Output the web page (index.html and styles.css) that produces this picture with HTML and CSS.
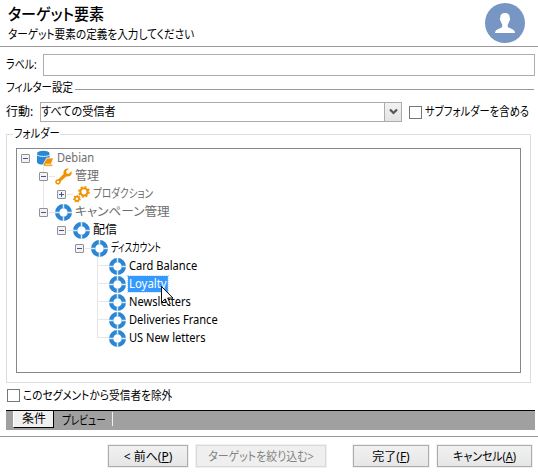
FILE: index.html
```
<!DOCTYPE html>
<html lang="ja">
<head>
<meta charset="utf-8">
<title>ターゲット要素</title>
<link rel="stylesheet" href="styles.css">
</head>
<body>
<svg class="defs" width="0" height="0">
  <symbol id="ring" viewBox="0 0 16 16">
    <circle cx="8" cy="8" r="6" fill="none" stroke="#2b86d3" stroke-width="4"/>
    <path d="M8 0v4M8 12v4M0 8h4M12 8h4" stroke="#d7eaf8" stroke-width="1.4"/>
  </symbol>
  <symbol id="database" viewBox="0 0 17 16">
    <path d="M0 3v8.500c0 1.600 2.500 2.600 6.500 2.600s6-1 6-2.600V3z" fill="#2b86d3"/>
    <ellipse cx="6.300" cy="2.600" rx="6.200" ry="2.400" fill="#2b86d3"/>
    <path d="M0 4.300c1.500 2.200 11.500 2.200 12.500 0" fill="none" stroke="#fff" stroke-width=".9"/>
    <path d="M9.800 7.500h6.700l-2.300 6.200h1.800l-.5 2H7.800c-1.800 0-1.900-1.500-1.200-2.700z" fill="#f29100" stroke="#fff" stroke-width=".8"/>
    <path d="M8.200 13.700h5.500" stroke="#fff" stroke-width=".8"/>
  </symbol>
  <symbol id="wrench" viewBox="0 0 16 16">
    <path d="M13 .5L10.500 3l.4 2.100 2.100.4L15.600 3c.9 3.400-2 5.700-5 4.900l-5.200 4.600c.4 3.600-5 4.200-5.200.7 0-2 1.600-2.800 3-2.500l4.900-5C7.300 2.500 9.700-.1 13 .5z" fill="#f29100"/>
    <circle cx="2.800" cy="13" r="1.100" fill="#fff"/>
  </symbol>
  <symbol id="gears" viewBox="0 0 16 16">
    <g fill="none" stroke="#f29100">
      <circle cx="10.300" cy="5.500" r="3.400" stroke-width="2"/>
      <circle cx="10.300" cy="5.500" r="4.800" stroke-width="1.500" stroke-dasharray="1.900 1.870"/>
      <circle cx="3.700" cy="12" r="2" stroke-width="1.500"/>
      <circle cx="3.700" cy="12" r="3" stroke-width="1.200" stroke-dasharray="1.350 1.350"/>
    </g>
  </symbol>
</svg>
<main class="wizard">
  <header class="head">
    <div>
      <h1><span class="t t-title">ターゲット要素</span></h1>
      <p><span class="t t-sub">ターゲット要素の定義を入力してください</span></p>
    </div>
    <svg class="avatar" width="40" height="40" viewBox="0 0 40 40">
      <circle cx="20" cy="20" r="20" fill="#7796c4"/>
      <path d="M20 10c3.500 0 5 2 4.700 5 .8.300.4 2.600-.5 3.200-.3 1.600-.9 2.400-1.400 3v2.500c1 2 7.200 2 7.200 6.300H10c0-4.300 6.200-4.300 7.200-6.300v-2.500c-.5-.6-1.100-1.400-1.400-3-.9-.6-1.300-2.900-.5-3.200-.3-3 1.200-5 4.700-5z" fill="#fff"/>
    </svg>
  </header>
  <div class="label-row"><div class="caption"><span class="t t-label">ラベル:</span></div><div class="input"></div></div>
  <div class="section"><div class="caption"><span class="t t-filter">フィルター設定</span></div><i></i></div>
  <div class="filter-row">
    <div class="caption">行動:</div>
    <div class="select"><span class="t t-all">すべての受信者</span><b><svg width="9" height="8" viewBox="0 0 9 8"><path d="M1 1.500l3.500 3.500L8 1.500" fill="none" stroke="#555" stroke-width="2.200"/></svg></b></div>
    <i class="check"></i><span class="t t-subf">サブフォルダーを含める</span>
  </div>
  <section class="group">
    <div class="legend"><span class="t t-folder">フォルダー</span></div>
    <div class="tree">
      <div class="row"><i class="exp"></i><svg class="ic"><use href="#database"/></svg><span class="name dim t t-latin">Debian</span></div>
      <div class="row l1"><i class="exp"></i><svg class="ic"><use href="#wrench"/></svg><span class="name dim">管理</span></div>
      <div class="row l2 mid"><i class="exp plus"></i><svg class="ic"><use href="#gears"/></svg><span class="name dim t t-prod">プロダクション</span></div>
      <div class="row l1 end"><i class="exp"></i><svg class="ic"><use href="#ring"/></svg><span class="name dim t t-camp">キャンペーン管理</span></div>
      <div class="row l2"><i class="exp"></i><svg class="ic"><use href="#ring"/></svg><span class="name">配信</span></div>
      <div class="row l3"><i class="exp"></i><svg class="ic"><use href="#ring"/></svg><span class="name t t-disc">ディスカウント</span></div>
      <div class="row leaf"><svg class="ic"><use href="#ring"/></svg><span class="name t t-latin">Card Balance</span></div>
      <div class="row leaf"><svg class="ic"><use href="#ring"/></svg><span class="name selected t t-loyalty">Loyalty</span></div>
      <div class="row leaf"><svg class="ic"><use href="#ring"/></svg><span class="name t t-latin">Newsletters</span></div>
      <div class="row leaf"><svg class="ic"><use href="#ring"/></svg><span class="name t t-latin">Deliveries France</span></div>
      <div class="row leaf last"><svg class="ic"><use href="#ring"/></svg><span class="name t t-latin">US New letters</span></div>
      <svg class="cursor" width="13" height="20" viewBox="0 0 13 20"><path d="M.5.5v16l3.700-3.600 2.600 6 2.500-1.100-2.600-5.800h5.200z" fill="#fff" stroke="#111"/></svg>
    </div>
  </section>
  <div class="exclude"><i class="check"></i><span class="t t-excl">このセグメントから受信者を除外</span></div>
  <nav class="tabs"><div class="tab on">条件</div><div class="tab"><span class="t t-prev">プレビュー</span></div></nav>
  <footer class="foot">
    <div class="btn b1"><span>&lt; 前へ(<u>P</u>)</span></div>
    <div class="btn b2"><span class="t t-btn">ターゲットを絞り込む&gt;</span></div>
    <div class="btn b3"><span>完了(<u>F</u>)</span></div>
    <div class="btn b4"><span class="t t-btn">キャンセル(<u>A</u>)</span></div>
  </footer>
</main>
</body>
</html>
```
FILE: styles.css
```
* { box-sizing: border-box; }
body { margin: 0; background: #fff; color: #000; font: 12px/16px "Noto Sans", "Noto Sans CJK JP", sans-serif; font-feature-settings: "palt"; overflow: hidden; }
.defs { position: absolute; }

/* condensed captions */
.t { display: inline-block; transform-origin: 0 50%; }
.t-title { transform: scaleX(.94); }
.t-sub { transform: scaleX(.886); }
.t-label { transform: scaleX(.83); }
.t-filter { transform: scaleX(.874); }
.t-all { transform: scaleX(.93); }
.t-subf { transform: scaleX(.86); }
.t-folder { transform: scaleX(.86); }
.t-latin { transform: scaleX(.925); }
.t-loyalty { transform: scaleX(.95); }
.t-prod { transform: scaleX(.8); }
.t-camp { transform: scaleX(1.055); }
.t-disc { transform: scaleX(.69); }
.t-excl { transform: scaleX(.89); }
.t-prev { transform: scaleX(.8); }
.t-btn { transform: scaleX(.91); transform-origin: 50% 50%; }

.wizard { width: 538px; height: 472px; display: flex; flex-direction: column; white-space: nowrap; }
.wizard > * { flex: none; }
.head { height: 47px; padding: 3px 13px 0 8px; display: flex; justify-content: space-between; border-bottom: 1px solid #999; }
h1 { margin: 0; font-size: 16px; line-height: 22px; font-weight: 500; }
p { margin: 2px 0 0; }
.caption { flex: none; }
.label-row { display: flex; align-items: center; height: 22px; margin: 7px 3px 0 6px; }
.label-row .caption { width: 37px; }
.input { flex: 1; height: 22px; border: 1px solid #abadb3; }
.section { display: flex; align-items: center; height: 16px; margin: 4px 4px 0 6px; }
.section .caption { width: 69px; }
.section i { flex: 1; height: 1px; margin-top: 3px; background: #999; }
.filter-row { display: flex; align-items: center; height: 20px; margin: 6px 0 0 6px; }
.filter-row .caption { width: 34px; }
.select { width: 362px; height: 20px; flex: none; border: 1px solid #acacac; display: flex; justify-content: space-between; align-items: center; }
.select b { width: 17px; height: 18px; border-left: 1px solid #acacac; background: linear-gradient(#f2f2f2, #e4e4e4); display: flex; align-items: center; justify-content: center; }
.check { width: 13px; height: 13px; border: 1px solid #777; background: #fff; flex: none; }
.filter-row .check { margin: 0 3px 0 7px; }
.group { width: 525px; height: 249px; margin: 12px 0 0 6px; border: 1px solid #dcdcdc; padding: 0 9px; }
.legend { height: 13px; margin-left: -3px; }
.legend span { position: relative; top: -9px; background: #fff; padding: 0 1px; }
.tree { position: relative; width: 505px; height: 225px; border: 1px solid #828790; padding-left: 4px; }
.row { position: relative; height: 18px; display: flex; align-items: center; }
.l1 { padding-left: 18px; }
.l2 { padding-left: 36px; }
.l3 { padding-left: 54px; }
.leaf { padding-left: 89px; }
.exp { position: relative; width: 9px; height: 9px; margin-right: 8px; flex: none; border: 1px solid #919191; border-radius: 1px; background: linear-gradient(#3c55a3, #3c55a3) center / 5px 1px no-repeat, #f3f3f3; }
.plus { background: linear-gradient(#3c55a3, #3c55a3) center / 5px 1px no-repeat, linear-gradient(#3c55a3, #3c55a3) center / 1px 5px no-repeat, #f3f3f3; }
.row:not(:first-child) .exp::after { content: ""; position: absolute; left: 9px; top: 3px; width: 6px; height: 1px; background: #e6e6e6; }
.l1::before, .mid::before { content: ""; position: absolute; left: 22px; top: 0; width: 1px; height: 18px; background: #e6e6e6; }
.end::before { height: 9px; }
.ic { width: 17px; height: 17px; margin: 0 3px 0 -1px; flex: none; }
.dim { color: #6d6d6d; }
.selected { color: #fff; background: #3399ff; outline: 1px dotted #b5d9ff; margin-left: -1px; padding: 0 1px; }
.leaf::before { content: ""; position: absolute; left: 76px; top: 0; width: 12px; height: 18px; background: linear-gradient(#e6e6e6, #e6e6e6) 0 0 / 1px 100% no-repeat, linear-gradient(#e6e6e6, #e6e6e6) 0 8px / 100% 1px no-repeat; }
.last::before { height: 9px; }
.cursor { position: absolute; left: 144px; top: 137px; }
.exclude { display: flex; align-items: center; gap: 3px; height: 13px; margin: 6px 0 0 7px; }
.tabs { display: flex; width: 529px; height: 20px; margin: 8px 0 0 6px; padding-left: 7px; background: #a0a0a0; border-top: 1px solid #000; }
.tab { height: 14px; padding: 0 8px; line-height: 17px; margin-top: 1px; width: 59px; border-right: 1px solid #f0f0f0; }
.on { margin-top: 0; height: 17px; width: 41px; line-height: 15px; background: #f0f0f0; border-left: 1px solid #fff; border-right: 1px solid #000; border-bottom: 1px solid #000; }
.foot { display: flex; height: 36px; margin-top: 6px; padding: 8px 0 0 108px; border-top: 1px solid #999; }
.btn { height: 22px; line-height: 21px; text-align: center; border: 1px solid #acacac; background: linear-gradient(#f1f1f1, #e6e6e6); box-shadow: 0 0 0 1px #f0f0f0; }
.b1 { width: 80px; }
.b2 { width: 130px; margin-left: 8px; color: #838383; background: #efefef; border-color: #d9d9d9; }
.b3 { width: 76px; margin-left: 27px; }
.b4 { width: 95px; margin-left: 8px; }
```
